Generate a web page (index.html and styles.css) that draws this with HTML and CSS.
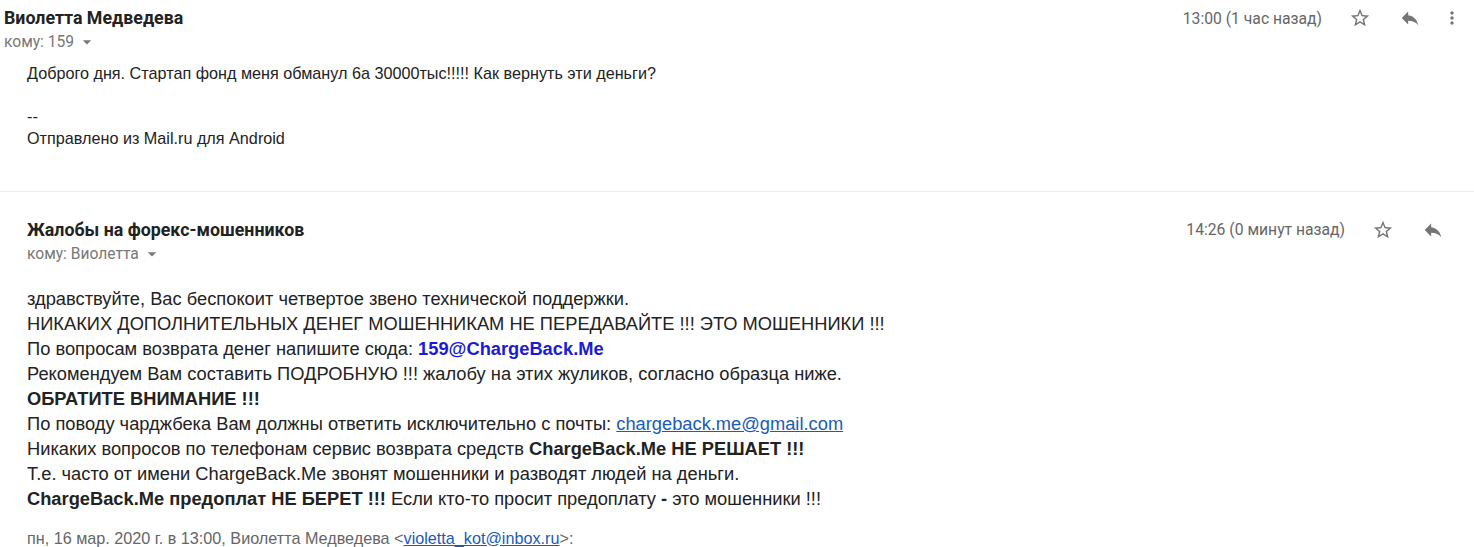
FILE: index.html
```html
<!DOCTYPE html>
<html lang="ru">
<head>
<meta charset="utf-8">
<title>Письмо</title>
<link rel="stylesheet" href="styles.css">
</head>
<body>
<div class="thread">
  <section class="msg msg-first">
    <header class="head">
      <div class="row">
        <div class="name">Виолетта Медведева</div>
        <div class="meta">
          <span class="time">13:00 (1 час назад)</span>
          <span class="ico ico-star"><svg viewBox="0 0 24 24"><path d="M22 9.24l-7.19-.62L12 2 9.19 8.63 2 9.240l5.46 4.73L5.82 21 12 17.27 18.18 21l-1.63-7.03L22 9.24zM12 15.4l-3.76 2.27 1-4.28-3.32-2.88 4.38-.38L12 6.1l1.71 4.04 4.38.38-3.32 2.88 1 4.28L12 15.4z"/></svg></span>
          <span class="ico ico-reply"><svg viewBox="0 0 24 24"><path d="M10 9V5l-7 7 7 7v-4.1c5 0 8.5 1.6 11 5.1-1-5-4-10-11-11z"/></svg></span>
          <span class="ico ico-more"><svg viewBox="0 0 24 24"><path d="M12 8c1.1 0 2-.9 2-2s-.9-2-2-2-2 .9-2 2 .9 2 2 2zm0 2c-1.1 0-2 .9-2 2s.9 2 2 2 2-.9 2-2-.9-2-2-2zm0 6c-1.1 0-2 .9-2 2s.9 2 2 2 2-.9 2-2-.9-2-2-2z"/></svg></span>
        </div>
      </div>
      <div class="to">кому: 159 <svg class="caret" viewBox="0 0 24 24"><path d="M7 10l5 5 5-5z"/></svg></div>
    </header>
    <div class="body body-first">
      <p>Доброго дня. Стартап фонд меня обманул 6а 30000тыс!!!!! Как вернуть эти деньги?</p>
      <p class="sig">--<br>Отправлено из Mail.ru для Android</p>
    </div>
  </section>

  <div class="divider"></div>

  <section class="msg msg-second">
    <header class="head">
      <div class="row">
        <div class="name">Жалобы на форекс-мошенников</div>
        <div class="meta">
          <span class="time">14:26 (0 минут назад)</span>
          <span class="ico ico-star"><svg viewBox="0 0 24 24"><path d="M22 9.24l-7.19-.62L12 2 9.19 8.63 2 9.24l5.46 4.73L5.82 21 12 17.27 18.18 21l-1.63-7.03L22 9.24zM12 15.4l-3.76 2.27 1-4.28-3.32-2.88 4.38-.38L12 6.1l1.71 4.04 4.38.38-3.32 2.88 1 4.28L12 15.4z"/></svg></span>
          <span class="ico ico-reply"><svg viewBox="0 0 24 24"><path d="M10 9V5l-7 7 7 7v-4.1c5 0 8.5 1.6 11 5.1-1-5-4-10-11-11z"/></svg></span>
        </div>
      </div>
      <div class="to">кому: Виолетта <svg class="caret" viewBox="0 0 24 24"><path d="M7 10l5 5 5-5z"/></svg></div>
    </header>
    <div class="body body-second">
      <div>здравствуйте, Вас беспокоит четвертое звено технической поддержки.</div>
      <div>НИКАКИХ ДОПОЛНИТЕЛЬНЫХ ДЕНЕГ МОШЕННИКАМ НЕ ПЕРЕДАВАЙТЕ !!! ЭТО МОШЕННИКИ !!!</div>
      <div>По вопросам возврата денег напишите сюда: <b class="blue">159@ChargeBack.Me</b></div>
      <div>Рекомендуем Вам составить ПОДРОБНУЮ !!! жалобу на этих жуликов, согласно образца ниже.</div>
      <div><b>ОБРАТИТЕ ВНИМАНИЕ !!!</b></div>
      <div>По поводу чарджбека Вам должны ответить исключительно с почты: <a class="link" href="#">chargeback.me@gmail.com</a></div>
      <div>Никаких вопросов по телефонам сервис возврата средств <b>ChargeBack.Me НЕ РЕШАЕТ !!!</b></div>
      <div>Т.е. часто от имени ChargeBack.Me звонят мошенники и разводят людей на деньги.</div>
      <div><b>ChargeBack.Me предоплат НЕ БЕРЕТ !!!</b> Если кто-то просит предоплату <b>-</b> это мошенники !!!</div>
    </div>
    <div class="quote">пн, 16 мар. 2020 г. в 13:00, Виолетта Медведева &lt;<a class="link" href="#">violetta_kot@inbox.ru</a>&gt;:</div>
  </section>
</div>
</body>
</html>
```

FILE: styles.css
```css
html, body {
  margin: 0;
  padding: 0;
  background: #fff;
}
body {
  width: 1474px;
  height: 547px;
  overflow: hidden;
  font-family: "Liberation Sans", Arial, sans-serif;
  color: #222;
}
.thread {
  display: flex;
  flex-direction: column;
}
.msg-first {
  padding: 0 2px 0 4px;
}
.msg-second {
  padding: 0 21px 0 27px;
}
.head {
  display: flex;
  flex-direction: column;
}
.row {
  display: flex;
  justify-content: space-between;
  align-items: center;
  height: 22px;
  margin-top: 7px;
}
.msg-second .row {
  margin-top: 27px;
}
.name {
  font-family: Roboto, "Liberation Sans", sans-serif;
  font-weight: 700;
  font-size: 17.8px;
  line-height: 22px;
  color: #222;
}
.to {
  font-family: Roboto, "Liberation Sans", sans-serif;
  font-size: 15.6px;
  line-height: 20px;
  color: #777;
  margin-top: 3px;
  display: flex;
  align-items: center;
}
.caret {
  width: 20px;
  height: 20px;
  fill: #777;
  margin-left: 3px;
}
.meta {
  display: flex;
  align-items: center;
}
.time {
  font-family: Roboto, "Liberation Sans", sans-serif;
  font-size: 15.7px;
  color: #666;
  margin-right: 18px;
}
.ico {
  width: 40px;
  height: 24px;
  display: flex;
  justify-content: center;
  align-items: center;
}
.ico svg {
  width: 22px;
  height: 22px;
  fill: #757575;
}
.ico-reply {
  margin-left: 10px;
}
.ico-more {
  margin-left: 2px;
}
.ico-more svg {
  width: 20px;
  height: 20px;
}
.body p {
  margin: 0;
}
.body-first {
  padding-left: 23px;
  font-size: 16.2px;
  line-height: 21.5px;
  margin-top: 11px;
  color: #222;
}
.body-first .sig {
  margin-top: 21.5px;
}
.divider {
  height: 1px;
  background: #ececec;
  margin-top: 41.5px;
}
.body-second {
  margin-top: 22.5px;
  font-size: 18.3px;
  line-height: 25px;
}
.blue {
  color: #1a1ad8;
}
.link {
  color: #1a5bb8;
  text-decoration: underline;
}
.quote {
  margin-top: 15.5px;
  font-size: 16.2px;
  line-height: 22px;
  color: #666;
}
```
